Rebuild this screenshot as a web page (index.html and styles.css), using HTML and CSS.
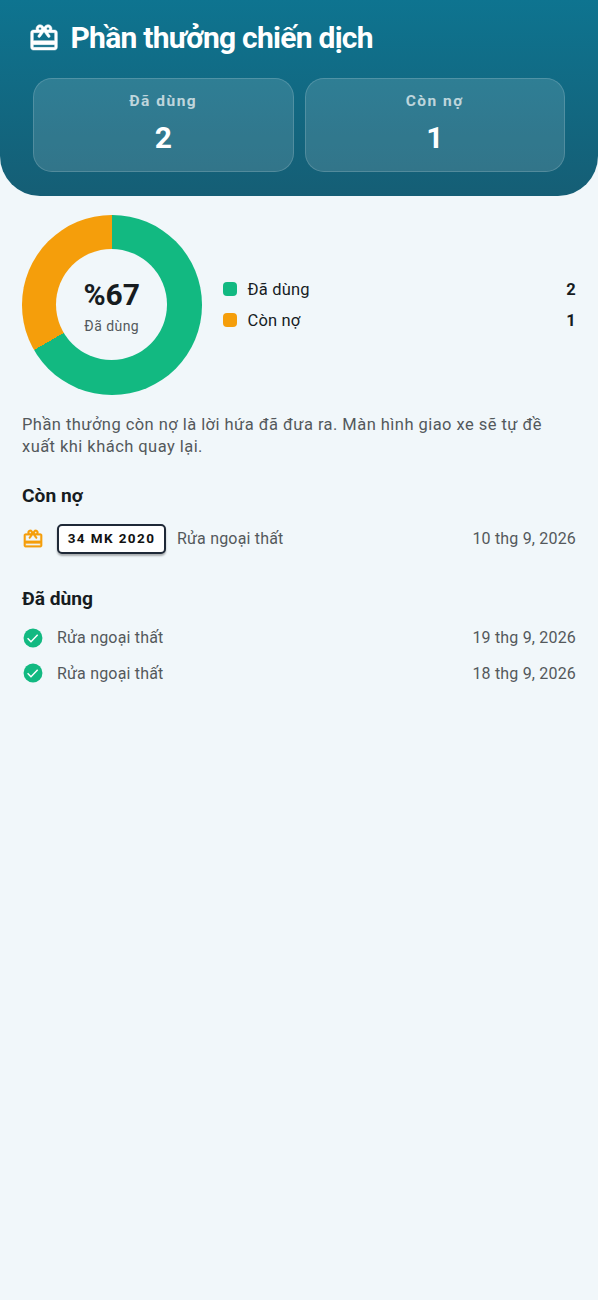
FILE: index.html
```html
<!DOCTYPE html>
<html lang="vi">
<head>
<meta charset="utf-8">
<title>Phần thưởng chiến dịch</title>
<link rel="stylesheet" href="styles.css">
</head>
<body>
<svg class="defs" width="0" height="0">
  <symbol id="gift" viewBox="0 0 24 24"><path d="M20 6h-2.180c.11-.31.18-.65.18-1 0-1.660-1.340-3-3-3-1.050 0-1.960.54-2.500 1.350l-.5.67-.5-.68C10.960 2.540 10.050 2 9 2 7.340 2 6 3.340 6 5c0 .35.07.69.18 1H4c-1.110 0-1.990.89-1.990 2L2 19c0 1.110.89 2 2 2h16c1.110 0 2-.89 2-2V8c0-1.110-.89-2-2-2zm-5-2c.55 0 1 .45 1 1s-.45 1-1 1-1-.45-1-1 .45-1 1-1zM9 4c.55 0 1 .45 1 1s-.45 1-1 1-1-.45-1-1 .45-1 1-1zm11 15H4v-2h16v2zm0-5H4V8h5.080L7.600 10.020Q7 10.900 7.800 11.420Q8.600 11.980 9.200 11.200L12 7.400l2.800 3.800Q15.400 11.980 16.200 11.420Q17 10.900 16.400 10.020L14.920 8H20v6z"/></symbol>
  <symbol id="check" viewBox="0 0 24 24"><circle cx="12" cy="12" r="10.300"/><path class="tick" d="M6.100 12.300l3.700 3.700 7.300-7.500"/></symbol>
</svg>
<header class="hero">
  <h1 class="title"><svg class="title-icon"><use href="#gift"/></svg><span>Phần thưởng chiến dịch</span></h1>
  <div class="stats">
    <div class="stat"><span class="stat-label">Đã dùng</span><b class="stat-value">2</b></div>
    <div class="stat"><span class="stat-label">Còn nợ</span><b class="stat-value">1</b></div>
  </div>
</header>
<main class="content">
  <section class="summary">
    <div class="donut"><div class="hole"><b class="percent">%67</b><span class="caption">Đã dùng</span></div></div>
    <div class="legend">
      <div class="legend-row"><i class="swatch green"></i><span>Đã dùng</span><b class="end">2</b></div>
      <div class="legend-row"><i class="swatch orange"></i><span>Còn nợ</span><b class="end">1</b></div>
    </div>
  </section>
  <p class="note">Phần thưởng còn nợ là lời hứa đã đưa ra. Màn hình giao xe sẽ tự đề xuất khi khách quay lại.</p>
  <h2 class="heading">Còn nợ</h2>
  <div class="row owed"><svg class="icon gift"><use href="#gift"/></svg><b class="plate">34 MK 2020</b><span>Rửa ngoại thất</span><time class="end">10 thg 9, 2026</time></div>
  <h2 class="heading used">Đã dùng</h2>
  <div class="row"><svg class="icon check"><use href="#check"/></svg><span>Rửa ngoại thất</span><time class="end">19 thg 9, 2026</time></div>
  <div class="row"><svg class="icon check"><use href="#check"/></svg><span>Rửa ngoại thất</span><time class="end">18 thg 9, 2026</time></div>
</main>
</body>
</html>
```
FILE: styles.css
```css
* { box-sizing: border-box; }
body { margin: 0; min-height: 1300px; background: #f1f7fa; color: #171c1f; font-family: Roboto, sans-serif; font-size: 16px; }
.defs { position: absolute; }
.hero { height: 196px; padding: 17px 33px 0; border-radius: 0 0 40px 40px; background: linear-gradient(#0e7490, #155e75); color: #fff; }
.title { display: flex; align-items: center; gap: 11px; height: 40px; margin: 0 0 21px -5.500px; font-size: 30px; font-weight: 700; letter-spacing: -.74px; white-space: nowrap; }
.title-icon { width: 32px; height: 32px; margin-top: 1px; fill: currentColor; stroke: currentColor; stroke-width: .35; stroke-linejoin: round; }
.stats { display: grid; grid-template-columns: 1fr 1fr; gap: 11px; }
.stat { display: flex; flex-direction: column; align-items: center; height: 93.500px; padding-top: 13px; border: 1px solid rgb(255 255 255 / 16%); border-radius: 19px; background: rgb(255 255 255 / 13%); }
.stat-label { font-size: 15.500px; line-height: 18px; font-weight: 700; letter-spacing: 1.500px; color: rgb(255 255 255 / 70%); }
.stat-value { margin-top: 10px; font-size: 30px; line-height: 36px; }
.content { padding: 19px 22px; }
.summary { display: flex; align-items: center; gap: 21.500px; }
.donut { display: grid; place-items: center; width: 179.500px; height: 179.500px; flex: none; border-radius: 50%; background: conic-gradient(#12b981 0 240deg, #f59e0b 240deg 360deg); }
.hole { display: flex; flex-direction: column; align-items: center; width: 111px; height: 111px; padding-top: 28px; border-radius: 50%; background: #f1f7fa; }
.percent { font-size: 30px; line-height: 36px; }
.caption { margin-top: 4px; font-size: 14px; line-height: 18px; letter-spacing: .45px; color: #54595c; }
.legend { flex: 1; display: grid; gap: 7px; }
.legend-row { display: flex; align-items: center; line-height: 22px; font-size: 16.500px; letter-spacing: .18px; }
.legend-row span, .legend-row b { padding-top: 2px; }
.swatch { width: 14px; height: 14px; margin-right: 10.500px; border-radius: 4px; }
.green { background: #12b981; }
.orange { background: #f59e0b; }
.end { margin-left: auto; }
.note { margin: 19.500px 0 0; font-size: 16.500px; line-height: 22px; letter-spacing: .45px; color: #54595c; }
.heading { margin: 25px 0 0; font-size: 19.200px; line-height: 26px; letter-spacing: 0; }
.used { margin: 32px 0 8px; }
.row { display: flex; align-items: center; height: 35.500px; letter-spacing: .18px; color: #54595c; }
.owed { height: 30px; margin-top: 15px; }
.owed span, .owed time { padding-bottom: 2px; }
.icon { width: 22px; height: 22px; margin-right: 13px; }
.gift { margin-top: -1px; fill: #f59e0b; stroke: #f59e0b; stroke-width: .35; stroke-linejoin: round; }
.check { fill: #12b981; }
.tick { fill: none; stroke: #fff; stroke-width: 1.600; }
.plate { display: grid; place-items: center; width: 109px; height: 30px; margin-right: 11px; padding-bottom: 2px; border: 2px solid #1f2937; border-radius: 5px; background: #fff; box-shadow: 0 2px 2px rgb(0 0 0 / 30%); color: #111; font-size: 13.500px; letter-spacing: 1.400px; }
```
